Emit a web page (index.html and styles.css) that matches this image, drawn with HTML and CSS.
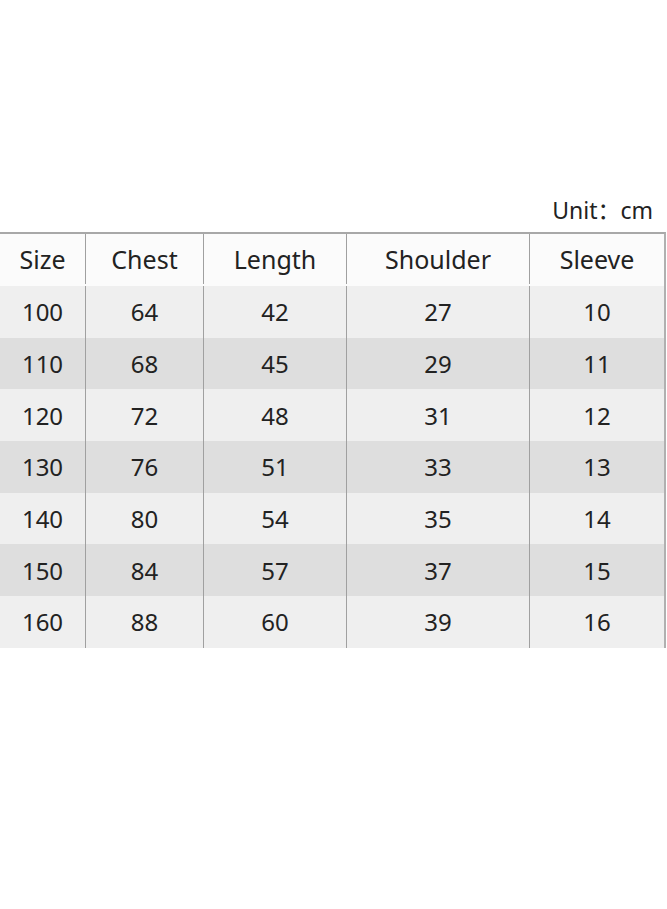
FILE: index.html
```html
<!DOCTYPE html>
<html>
<head>
<meta charset="utf-8">
<link rel="stylesheet" href="styles.css">
</head>
<body>
<div class="page">
  <div class="unit">Unit：cm</div>
  <div class="chart">
    <div class="row head"><div>Size</div><div>Chest</div><div>Length</div><div>Shoulder</div><div>Sleeve</div></div>
    <div class="row light"><div>100</div><div>64</div><div>42</div><div>27</div><div>10</div></div>
    <div class="row dark"><div>110</div><div>68</div><div>45</div><div>29</div><div>11</div></div>
    <div class="row light"><div>120</div><div>72</div><div>48</div><div>31</div><div>12</div></div>
    <div class="row dark"><div>130</div><div>76</div><div>51</div><div>33</div><div>13</div></div>
    <div class="row light"><div>140</div><div>80</div><div>54</div><div>35</div><div>14</div></div>
    <div class="row dark"><div>150</div><div>84</div><div>57</div><div>37</div><div>15</div></div>
    <div class="row light"><div>160</div><div>88</div><div>60</div><div>39</div><div>16</div></div>
  </div>
</div>
</body>
</html>
```
FILE: styles.css
```css
html, body {
  margin: 0;
  padding: 0;
  background: #ffffff;
}
.page {
  width: 667px;
  height: 909px;
  font-family: "Noto Sans", "Open Sans", "Noto Sans CJK SC", sans-serif;
  color: #222;
  padding-top: 194px;
  box-sizing: border-box;
}
.unit {
  text-align: right;
  font-size: 23px;
  line-height: 32px;
  padding-right: 14px;
  height: 38px;
  font-family: "Noto Sans", "Noto Sans CJK SC", sans-serif;
}
.chart {
  width: 666px;
  border-top: 2px solid #a8a8a8;
  border-right: 2px solid #b0b0b0;
  box-sizing: border-box;
}
.row {
  display: grid;
  grid-template-columns: 86px 118px 143px 183px 1fr;
  height: 51.7px;
  font-size: 24px;
}
.row > div {
  display: flex;
  align-items: center;
  justify-content: center;
  border-right: 1.5px solid #a0a0a0;
}
.row > div:last-child {
  border-right: none;
}
.row.head {
  height: 52px;
  background: #fbfbfb;
  font-size: 25px;
  padding-bottom: 2px;
  box-sizing: border-box;
}
.row.light {
  background: #efefef;
}
.row.dark {
  background: #dedede;
}
```
